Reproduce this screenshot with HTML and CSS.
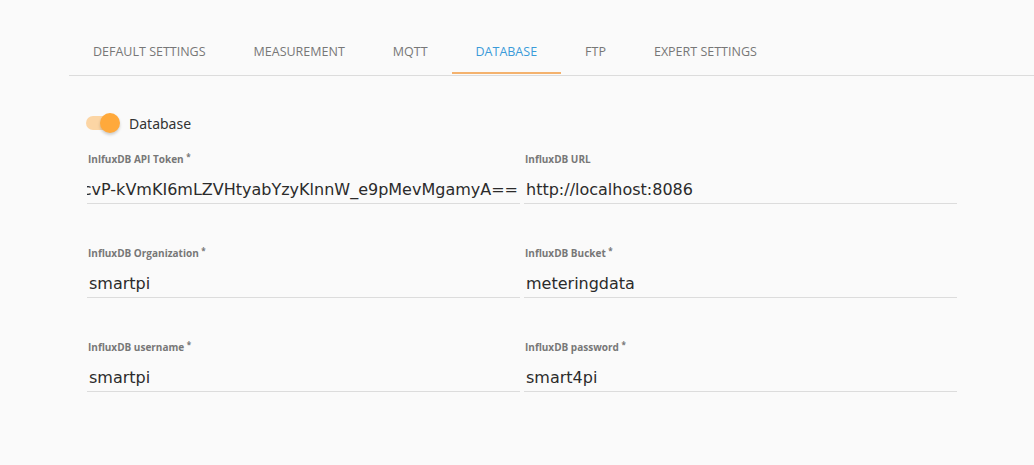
FILE: index.html
```html
<!DOCTYPE html>
<html>
<head>
<meta charset="utf-8">
<link rel="stylesheet" href="styles.css">
</head>
<body>
<div class="page">
  <nav class="tabs">
    <div class="tab">Default Settings</div>
    <div class="tab">Measurement</div>
    <div class="tab">MQTT</div>
    <div class="tab active">Database</div>
    <div class="tab">FTP</div>
    <div class="tab">Expert Settings</div>
  </nav>
  <section class="content">
    <div class="switch-row">
      <div class="switch"><div class="track"></div><div class="thumb"></div></div>
      <span class="switch-label">Database</span>
    </div>
    <div class="grid">
      <div class="field">
        <label>InlfuxDB API Token <sup class="req">*</sup></label>
        <div class="value token"><span>mTxlqYr1ZhsXcvP-kVmKI6mLZVHtyabYzyKlnnW_e9pMevMgamyA==</span></div>
      </div>
      <div class="field">
        <label>InfluxDB URL</label>
        <div class="value">http://localhost:8086</div>
      </div>
      <div class="field">
        <label>InfluxDB Organization <sup class="req">*</sup></label>
        <div class="value">smartpi</div>
      </div>
      <div class="field">
        <label>InfluxDB Bucket <sup class="req">*</sup></label>
        <div class="value">meteringdata</div>
      </div>
      <div class="field">
        <label>InfluxDB username <sup class="req">*</sup></label>
        <div class="value">smartpi</div>
      </div>
      <div class="field">
        <label>InfluxDB password <sup class="req">*</sup></label>
        <div class="value">smart4pi</div>
      </div>
    </div>
  </section>
</div>
</body>
</html>
```
FILE: styles.css
```css
html, body {
  margin: 0;
  padding: 0;
  background: #fafafa;
}
.page {
  width: 1034px;
  height: 465px;
  padding-top: 27px;
  box-sizing: border-box;
}
.tabs {
  display: flex;
  margin-left: 69px;
  height: 48px;
  border-bottom: 1px solid #dcdcdc;
}
.tab {
  padding: 0 24px;
  height: 48px;
  line-height: 50px;
  font-family: "Open Sans", "Lato", sans-serif;
  font-size: 12.5px;
  text-transform: uppercase;
  color: #777;
  position: relative;
  box-sizing: border-box;
}
.tab.active {
  color: #3a9bd9;
}
.tab.active::after {
  content: "";
  position: absolute;
  left: 0;
  right: 0;
  bottom: 1px;
  height: 2px;
  background: #f4b26e;
}
.content {
  padding: 35px 0 0 87px;
  width: 870px;
}
.switch-row {
  display: flex;
  align-items: center;
  height: 24px;
}
.switch {
  position: relative;
  width: 36px;
  height: 24px;
  margin-left: -1px;
}
.track {
  position: absolute;
  left: 0;
  top: 5px;
  width: 32px;
  height: 14px;
  border-radius: 7px;
  background: #fcd5a4;
}
.thumb {
  position: absolute;
  left: 14px;
  top: 2px;
  width: 20px;
  height: 20px;
  border-radius: 50%;
  background: #ffa93b;
  box-shadow: 0 2px 3px rgba(0,0,0,0.18);
}
.switch-label {
  margin-left: 7px;
  font-family: "Noto Sans", sans-serif;
  font-size: 14px;
  color: #333;
}
.grid {
  display: grid;
  grid-template-columns: 433px 433px;
  column-gap: 4px;
  row-gap: 41px;
  margin-top: 16px;
}
.field {
  display: flex;
  flex-direction: column;
}
.field label {
  font-family: "Open Sans", sans-serif;
  font-weight: 700;
  font-size: 10px;
  color: #777;
  height: 13px;
  padding-top: 1px;
  line-height: 14px;
  padding-left: 1px;
}
.req {
  font-size: 8px;
  vertical-align: 3px;
  line-height: 0;
}
.value {
  margin-top: 10px;
  height: 28px;
  line-height: 29px;
  border-bottom: 1px solid #dcdcdc;
  font-family: "DejaVu Sans", sans-serif;
  font-size: 16px;
  color: #2b2b2b;
  padding-left: 2px;
  white-space: nowrap;
  overflow: hidden;
}
.value.token {
  display: flex;
  justify-content: flex-end;
  padding-left: 0;
  padding-right: 2px;
}
```
